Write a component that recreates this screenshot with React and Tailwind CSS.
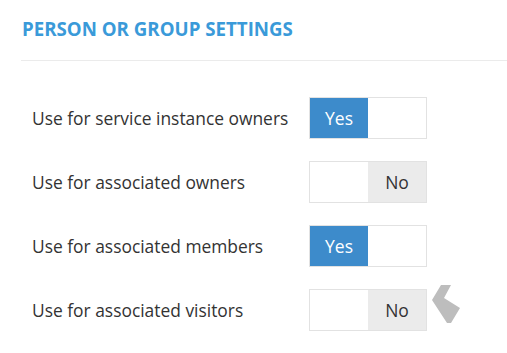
const rows = [
  { label: 'Use for service instance owners', on: true },
  { label: 'Use for associated owners', on: false },
  { label: 'Use for associated members', on: true },
  { label: 'Use for associated visitors', on: false, handle: true },
]

const Toggle = ({ on }) => (
  <div className="flex h-[42px] w-[118px] border border-[#e2e2e2] bg-white">
    {on ? (
      <>
        <div className="flex w-[58px] items-center justify-center bg-[#3d8bcb] text-[17.5px] text-white">
          Yes
        </div>
        <div className="flex-1" />
      </>
    ) : (
      <>
        <div className="w-[58px]" />
        <div className="flex flex-1 items-center justify-center bg-[#ebebeb] text-[17.5px] text-[#333]">
          No
        </div>
      </>
    )}
  </div>
)

const Handle = () => (
  <svg width="30" height="41" viewBox="0 0 30 41" className="ml-[4px] mt-[-12px] shrink-0">
    <polygon points="10,1 20,1 13,14 29,24 20,39 16,39 1,16" fill="#bdbdbd" />
  </svg>
)

export default function App() {
  return (
    <div
      className="h-[353px] w-[507px] bg-white pl-[21px]"
      style={{ fontFamily: '"Open Sans", sans-serif' }}
    >
      <div className="pt-[17px] pb-[19px]">
        <h2 className="pl-[1px] text-[18.7px] font-bold leading-[24px] text-[#3a9ad9]">
          PERSON OR GROUP SETTINGS
        </h2>
      </div>
      <div className="h-px bg-[#ebebeb]" />
      <div className="flex flex-col gap-[22px] pt-[36px] pl-[11px]">
        {rows.map((row) => (
          <div key={row.label} className="flex items-center">
            <span className="w-[277px] text-[17.4px] text-[#333]">{row.label}</span>
            <Toggle on={row.on} />
            {row.handle && <Handle />}
          </div>
        ))}
      </div>
    </div>
  )
}
